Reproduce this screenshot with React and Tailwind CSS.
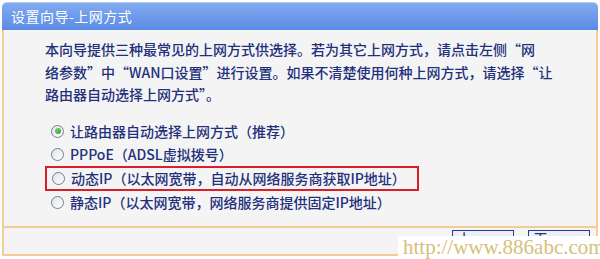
import React from 'react';

const font = { fontFamily: '"Noto Sans CJK SC", "Noto Sans", sans-serif' };

const Radio = ({ checked }) => (
  <span className="relative inline-flex w-[13px] h-[13px] shrink-0 rounded-full border border-[#6f7f98] bg-gradient-to-br from-[#dfe3ea] to-white items-center justify-center mr-[6px]">
    {checked && <span className="w-[6px] h-[6px] rounded-full bg-gradient-to-br from-[#7ed67e] to-[#23a023]" />}
  </span>
);

const Option = ({ checked, children, boxed }) => (
  <div
    className={
      boxed
        ? 'flex items-center h-[25px] w-[374px] -ml-[6px] pl-[5px] border-2 border-[#d81f2a]'
        : 'flex items-center h-[23px]'
    }
  >
    <Radio checked={checked} />
    <span>{children}</span>
  </div>
);

export default function App() {
  return (
    <div className="relative w-[600px] h-[259px] bg-white overflow-hidden text-[14px] font-medium text-[#22307c]" style={font}>
      <div className="mx-[2px] mt-[2px] flex flex-col">
        <div className="h-[28px] rounded-t-[5px] bg-gradient-to-b from-[#82aaf0] to-[#5a8be4] border-t border-[#b8cdf5] flex items-center pl-[9px] text-white text-[14px] font-normal tracking-[0.5px]">
          设置向导-上网方式
        </div>
        <div className="border-x-2 border-b-2 border-[#f4cc98] bg-[#f4f4f4]">
          <div className="pl-[41px] pr-[40px] pt-[8px] leading-[22.5px]">
            <p>本向导提供三种最常见的上网方式供选择。若为其它上网方式，请点击左侧“网</p>
            <p>络参数”中“WAN口设置”进行设置。如果不清楚使用何种上网方式，请选择“让</p>
            <p>路由器自动选择上网方式”。</p>
          </div>
          <div className="pl-[47px] pt-[14px] pb-[12px] flex flex-col">
            <Option checked>让路由器自动选择上网方式（推荐）</Option>
            <Option>PPPoE（ADSL虚拟拨号）</Option>
            <Option boxed>动态IP（以太网宽带，自动从网络服务商获取IP地址）</Option>
            <Option>静态IP（以太网宽带，网络服务商提供固定IP地址）</Option>
          </div>
          <div className="border-t-2 border-[#f4cc98] h-[28px] flex items-start justify-end pr-[6px] pt-[2px] gap-[14px]">
            <button className="w-[62px] h-[22px] border border-[#2b3c8a] bg-[#eceefa] text-[13px] text-[#22307c] leading-[14px] tracking-[12px]">上一步</button>
            <button className="w-[62px] h-[22px] border border-[#2b3c8a] bg-[#eceefa] text-[13px] text-[#22307c] leading-[14px] tracking-[12px]">下一步</button>
          </div>
        </div>
      </div>
      <div
        className="absolute left-[398px] top-[236px] w-[202px] h-[23px] bg-white flex items-center pl-[5px] text-[21px] font-normal text-[#d6c07a] leading-none"
        style={{ fontFamily: '"Liberation Serif", serif' }}
      >
        http://www.886abc.com
      </div>
    </div>
  );
}
